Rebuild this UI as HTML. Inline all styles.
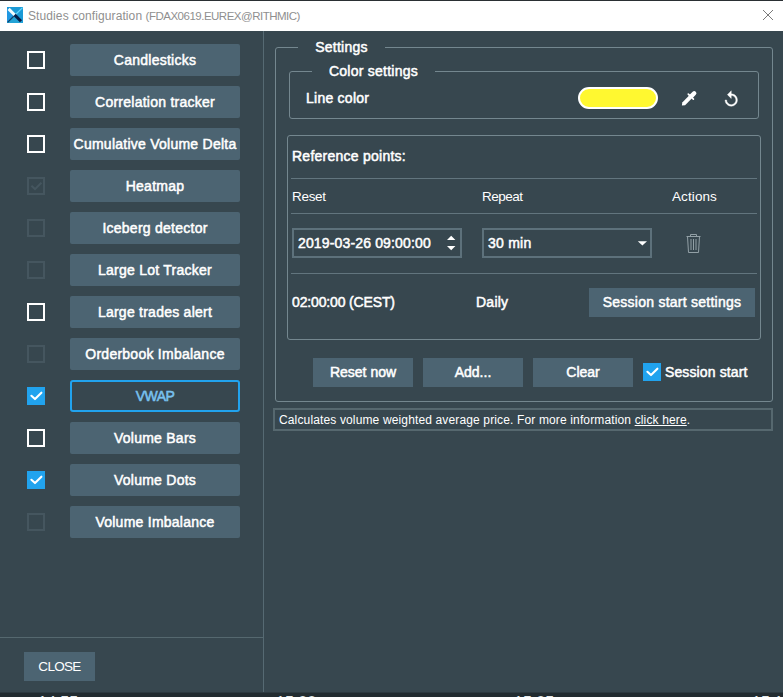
<!DOCTYPE html>
<html>
<head>
<meta charset="utf-8">
<title>Studies configuration</title>
<style>
html,body{margin:0;padding:0;}
body{width:783px;height:697px;overflow:hidden;background:#37474f;position:relative;font-family:"Liberation Sans",sans-serif;color:#fff;}
.abs{position:absolute;}
#topstrip{left:0;top:0;width:783px;height:2px;background:#2a2f33;}
#titlebar{left:0;top:1px;width:783px;height:30px;background:#fff;}
#title{left:28px;top:9px;font-size:12px;letter-spacing:-0.5px;color:#8f8f8f;white-space:nowrap;line-height:14px;}
#main{left:0;top:31px;width:783px;height:662px;background:#37474f;}
#botstrip{left:0;top:692px;width:783px;height:5px;background:#222c31;border-top:1px solid #2d3a41;box-sizing:border-box;}
#vdiv{left:263px;top:31px;width:1px;height:661px;background:#566a73;}
#hdiv{left:0;top:637px;width:263px;height:1px;background:#55686f;}
.btn{position:absolute;background:#4c6472;color:#fff;font-weight:normal;-webkit-text-stroke:0.5px #fff;letter-spacing:0.25px;font-size:14px;text-align:center;border-radius:2px;white-space:nowrap;box-sizing:border-box;}
.sbtn{left:70px;width:170px;height:32px;line-height:32px;}
.sbtn.sel{background:#37474f;border:2px solid #21a3ee;color:#78c1ee;-webkit-text-stroke:0.55px #78c1ee;letter-spacing:-0.6px;line-height:28px;border-radius:3px;}
.cb{position:absolute;left:27px;width:18px;height:18px;box-sizing:border-box;border:2px solid #fff;}
.cb.dis{border-color:#45565f;}
.cb.chk{border:none;background:#21a3ee;}
.cb svg{position:absolute;left:0;top:0;}
.fs{position:absolute;box-sizing:border-box;border:1px solid #74878f;border-radius:3px;}
.lg{position:absolute;background:#37474f;-webkit-text-stroke:0.5px #fff;letter-spacing:0.25px;font-size:14px;line-height:16px;white-space:nowrap;text-align:center;}
.t{position:absolute;white-space:nowrap;font-size:13.5px;letter-spacing:-0.3px;line-height:16px;color:#fff;}
.b{-webkit-text-stroke:0.5px #fff;letter-spacing:0.25px;font-size:14px;}
.hl{position:absolute;height:1px;background:#62757e;}
.inp{position:absolute;box-sizing:border-box;border:2px solid #5d717b;background:#37474f;}
</style>
</head>
<body>
<div id="main" class="abs"></div>
<div id="topstrip" class="abs"></div>
<div id="titlebar" class="abs"></div>
<svg class="abs" style="left:7px;top:7px" width="16" height="16" viewBox="0 0 16 16">
  <rect x="0" y="0" width="16" height="16" fill="#1b9ad6"/>
  <path d="M0 0 L8 8 L0 16 Z" fill="#2098e2"/>
  <path d="M0 16 L8 8 L16 16 Z" fill="#23a3d6"/>
  <path d="M8.3 7.7 L15.6 0.6" stroke="#66d6fb" stroke-width="1.3"/>
  <path d="M7.7 8.3 L0.6 15.4" stroke="#114069" stroke-width="1.3"/>
  <path d="M1.6 1.9 L8.2 8.5" stroke="#f4fdff" stroke-width="3" stroke-linecap="butt"/>
  <path d="M7.6 7.9 L14 14.3" stroke="#071d47" stroke-width="3" stroke-linecap="butt"/>
</svg>
<div id="title" class="abs"><span style="letter-spacing:0.1px">Studies configuration </span><span style="font-size:11.5px;letter-spacing:-0.5px">(FDAX0619.EUREX@RITHMIC)</span></div>
<svg class="abs" style="left:762px;top:9px" width="12" height="12" viewBox="0 0 12 12"><path d="M1 1 L11 11 M11 1 L1 11" stroke="#7a7a7a" stroke-width="1" fill="none"/></svg>

<div id="vdiv" class="abs"></div>
<div id="hdiv" class="abs"></div>

<!-- study list -->
<div class="cb" style="top:51px"></div>
<div class="btn sbtn" style="top:44px">Candlesticks</div>
<div class="cb" style="top:93px"></div>
<div class="btn sbtn" style="top:86px">Correlation tracker</div>
<div class="cb" style="top:135px"></div>
<div class="btn sbtn" style="top:128px">Cumulative Volume Delta</div>
<div class="cb dis" style="top:177px"><svg width="14" height="14" viewBox="0 0 14 14"><path d="M2.4 6.8 L6 10.1 L12.4 3.7" stroke="#45565f" stroke-width="2" fill="none"/></svg></div>
<div class="btn sbtn" style="top:170px">Heatmap</div>
<div class="cb dis" style="top:219px"></div>
<div class="btn sbtn" style="top:212px">Iceberg detector</div>
<div class="cb dis" style="top:261px"></div>
<div class="btn sbtn" style="top:254px">Large Lot Tracker</div>
<div class="cb" style="top:303px"></div>
<div class="btn sbtn" style="top:296px">Large trades alert</div>
<div class="cb dis" style="top:345px"></div>
<div class="btn sbtn" style="top:338px">Orderbook Imbalance</div>
<div class="cb chk" style="top:387px"><svg width="18" height="18" viewBox="0 0 18 18"><path d="M4.4 8.8 L8 12.1 L14.4 5.7" stroke="#fff" stroke-width="2.1" stroke-linecap="round" stroke-linejoin="round" fill="none"/></svg></div>
<div class="btn sbtn sel" style="top:380px">VWAP</div>
<div class="cb" style="top:429px"></div>
<div class="btn sbtn" style="top:422px">Volume Bars</div>
<div class="cb chk" style="top:471px"><svg width="18" height="18" viewBox="0 0 18 18"><path d="M4.4 8.8 L8 12.1 L14.4 5.7" stroke="#fff" stroke-width="2.1" stroke-linecap="round" stroke-linejoin="round" fill="none"/></svg></div>
<div class="btn sbtn" style="top:464px">Volume Dots</div>
<div class="cb dis" style="top:513px"></div>
<div class="btn sbtn" style="top:506px">Volume Imbalance</div>

<div class="btn" style="left:24px;top:652px;width:71px;height:29px;line-height:29px;font-weight:normal;font-size:13.5px;letter-spacing:-0.7px;-webkit-text-stroke:0;border-radius:0">CLOSE</div>

<!-- settings -->
<div class="fs" style="left:275px;top:47px;width:498px;height:355px"></div>
<div class="lg" style="left:298px;top:39px;width:87px">Settings</div>
<div class="fs" style="left:289px;top:71px;width:470px;height:48px"></div>
<div class="lg" style="left:312px;top:63px;width:123px">Color settings</div>
<div class="t b" style="left:306px;top:90px">Line color</div>
<div class="abs" style="left:578px;top:87px;width:80px;height:22px;box-sizing:border-box;border:2px solid #fff;border-radius:11px;background:#fff830"></div>

<div class="fs" style="left:287px;top:135px;width:474px;height:205px"></div>
<div class="t b" style="left:292px;top:148px">Reference points:</div>
<div class="hl" style="left:291px;top:178px;width:466px"></div>
<div class="t" style="left:292px;top:189px">Reset</div>
<div class="t" style="left:482px;top:189px;letter-spacing:-0.5px">Repeat</div>
<div class="t" style="left:672px;top:189px;letter-spacing:0.1px">Actions</div>
<div class="hl" style="left:291px;top:213px;width:466px"></div>
<div class="inp" style="left:292px;top:228px;width:170px;height:30px"></div>
<div class="t b" style="left:298px;top:235px;letter-spacing:0.15px">2019-03-26 09:00:00</div>
<div class="inp" style="left:482px;top:228px;width:170px;height:30px"></div>
<div class="t b" style="left:488px;top:235px">30 min</div>
<div class="hl" style="left:291px;top:273px;width:466px"></div>
<div class="t b" style="left:292px;top:294px;letter-spacing:-0.15px">02:00:00 (CEST)</div>
<div class="t b" style="left:476px;top:294px">Daily</div>
<div class="btn" style="left:589px;top:288px;width:166px;height:29px;line-height:29px;border-radius:0">Session start settings</div>

<div class="btn" style="left:313px;top:358px;width:100px;height:29px;line-height:29px;border-radius:0;letter-spacing:0">Reset now</div>
<div class="btn" style="left:423px;top:358px;width:100px;height:29px;line-height:29px;border-radius:0;letter-spacing:0">Add...</div>
<div class="btn" style="left:533px;top:358px;width:100px;height:29px;line-height:29px;border-radius:0;letter-spacing:0">Clear</div>
<div class="cb chk" style="left:643px;top:363px"><svg width="18" height="18" viewBox="0 0 18 18"><path d="M4.4 8.8 L8 12.1 L14.4 5.7" stroke="#fff" stroke-width="2.1" stroke-linecap="round" stroke-linejoin="round" fill="none"/></svg></div>
<div class="t b" style="left:665px;top:364px;letter-spacing:0.12px">Session start</div>

<div class="abs" style="left:273px;top:408px;width:500px;height:23px;box-sizing:border-box;border:2px solid #56686f;"></div>
<div class="t" style="left:279px;top:413px;font-size:12px;line-height:15px;letter-spacing:0.14px">Calculates volume weighted average price. For more information <span style="text-decoration:underline">click here</span>.</div>


<!-- icons -->
<svg class="abs" style="left:678px;top:88px" width="22" height="22" viewBox="678 88 22 22">
  <path d="M681.9 105.6 L682.3 102.4 L688.9 95.8 L691.7 98.6 L685.1 105.2 Z" fill="#fff"/>
  <path d="M688.3 94.1 L693.4 99.2" stroke="#fff" stroke-width="1.7" stroke-linecap="round"/>
  <path d="M691.4 96.1 L694.2 93.3" stroke="#fff" stroke-width="4.4" stroke-linecap="round"/>
</svg>
<svg class="abs" style="left:721.9px;top:90px" width="18.5" height="18.5" viewBox="0 0 24 24"><path fill="#fff" stroke="#fff" stroke-width="0.5" d="M12 5V1L7 6l5 5V7c3.31 0 6 2.69 6 6s-2.69 6-6 6-6-2.69-6-6H4c0 4.420 3.580 8 8 8s8-3.580 8-8-3.580-8-8-8z"/></svg>
<svg class="abs" style="left:444px;top:233px" width="14" height="20" viewBox="444 233 14 20"><path d="M447 240 L455.4 240 L451.2 235.8 Z M447 246 L455.4 246 L451.2 250.2 Z" fill="#fff"/></svg>
<svg class="abs" style="left:635px;top:238px" width="14" height="10" viewBox="635 238 14 10"><path d="M637.8 241.2 L647 241.2 L642.4 245.6 Z" fill="#fff"/></svg>
<svg class="abs" style="left:683px;top:231px" width="20" height="24" viewBox="683 231 20 24" fill="none" stroke="#92a0a6" stroke-width="1">
  <path d="M686.5 236.5 H700.5"/>
  <path d="M690.5 236.5 V234.5 H696.5 V236.5"/>
  <path d="M687.5 236.5 L688.5 252.5 H698.5 L699.5 236.5"/>
  <path d="M691 239 V250 M693.5 239 V250 M696 239 V250"/>
</svg>
<div id="botstrip" class="abs"></div>
<div class="abs" style="left:0;top:692px;width:783px;height:5px;overflow:hidden;font-size:16px;line-height:16px;color:#e4e9eb;">
<span class="abs" style="left:38px;top:2.6px">14:55</span><span class="abs" style="left:276px;top:2.6px">15:00</span><span class="abs" style="left:514px;top:2.6px">15:05</span><span class="abs" style="left:752px;top:2.6px">15:10</span>
</div>
</body>
</html>
